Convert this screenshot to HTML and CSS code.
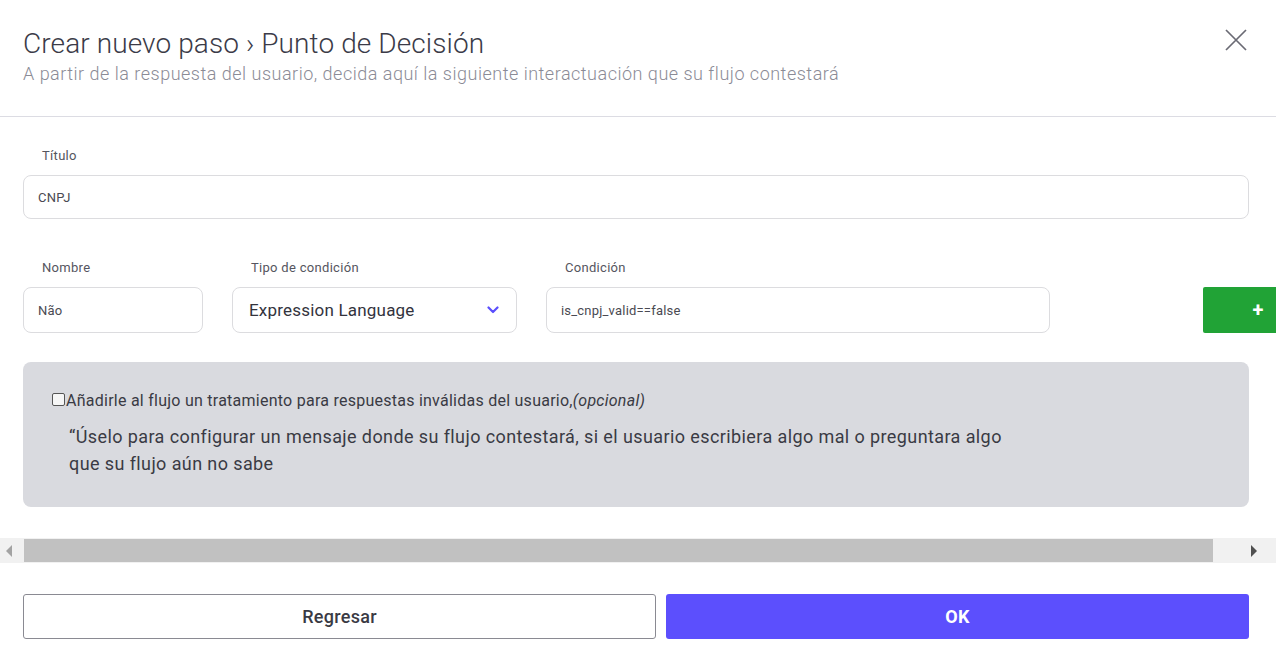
FILE: index.html
```html
<!DOCTYPE html>
<html lang="es">
<head>
<meta charset="utf-8">
<title>Crear nuevo paso</title>
<link rel="stylesheet" href="styles.css">
</head>
<body>
<div class="modal">
  <header class="modal-head">
    <div class="head-text">
      <h1 class="title">Crear nuevo paso › Punto de Decisión</h1>
      <p class="subtitle">A partir de la respuesta del usuario, decida aquí la siguiente interactuación que su flujo contestará</p>
    </div>
    <button class="close" type="button" aria-label="Cerrar">
      <svg width="24" height="24" viewBox="0 0 24 24"><path d="M2 2 L22 22 M22 2 L2 22" stroke="#6a6a74" stroke-width="1.7" fill="none"/></svg>
    </button>
  </header>

  <div class="modal-body">
    <div class="scroll-area">
      <div class="field">
        <label class="label">Título</label>
        <div class="input input-title">CNPJ</div>
      </div>

      <div class="cond-row">
        <div class="field f-name">
          <label class="label">Nombre</label>
          <div class="input input-row">Não</div>
        </div>
        <div class="field f-type">
          <label class="label">Tipo de condición</label>
          <div class="input input-row select">
            <span>Expression Language</span>
            <svg width="12" height="8" viewBox="0 0 12 8"><path d="M1.5 1.5 L6 6 L10.5 1.5" stroke="#5b4ffd" stroke-width="2.2" fill="none" stroke-linecap="round" stroke-linejoin="round"/></svg>
          </div>
        </div>
        <div class="field f-cond">
          <label class="label">Condición</label>
          <div class="input input-row">is_cnpj_valid==false</div>
        </div>
        <button class="add" type="button">+</button>
      </div>

      <div class="invalid-box">
        <label class="check-line">
          <input type="checkbox" class="check">
          <span>Añadirle al flujo un tratamiento para respuestas inválidas del usuario,<em>(opcional)</em></span>
        </label>
        <p class="quote">“Úselo para configurar un mensaje donde su flujo contestará, si el usuario escribiera algo mal o preguntara algo que su flujo aún no sabe</p>
      </div>
    </div>

    <div class="hscroll">
      <span class="arrow arrow-left"></span>
      <div class="track"><div class="thumb"></div></div>
      <span class="arrow arrow-right"></span>
    </div>
  </div>

  <footer class="modal-foot">
    <button class="btn btn-back" type="button">Regresar</button>
    <button class="btn btn-ok" type="button">OK</button>
  </footer>
</div>
</body>
</html>
```

FILE: styles.css
```css
* { box-sizing: border-box; }

html, body {
  margin: 0;
  background: #ffffff;
}

body {
  font-family: Roboto, "Noto Sans", Arial, sans-serif;
  color: #3c3c48;
  width: 1276px;
  height: 663px;
  overflow: hidden;
}

.modal {
  width: 1276px;
}

/* Header */
.modal-head {
  height: 117px;
  border-bottom: 1px solid #dcdce3;
  display: flex;
  justify-content: space-between;
  align-items: flex-start;
  padding: 26px 28px 0 23px;
}

.title {
  margin: 0;
  font-size: 28px;
  font-weight: 300;
  line-height: 36px;
  color: #3b3b48;
  letter-spacing: 0.1px;
}

.subtitle {
  margin: 0;
  font-size: 18px;
  font-weight: 300;
  line-height: 23px;
  color: #8b8b96;
  letter-spacing: 0.5px;
}

.close {
  border: 0;
  background: none;
  padding: 0;
  margin-top: 2px;
  cursor: pointer;
}

.close svg { display: block; }

/* Body */
.modal-body {
  width: 1276px;
}

.scroll-area {
  padding: 30px 0 0 23px;
  overflow: hidden;
  height: 421px;
}

.field {
  display: flex;
  flex-direction: column;
  flex: none;
}

.label {
  font-size: 13px;
  line-height: 18px;
  color: #555560;
  padding-left: 19px;
  margin-bottom: 10px;
  letter-spacing: 0.3px;
}

.input {
  border: 1px solid #dcdcdf;
  border-radius: 8px;
  background: #fff;
  font-size: 13px;
  color: #4a4a52;
  display: flex;
  align-items: center;
  padding: 0 14px;
  letter-spacing: 0.2px;
}

.input-title {
  width: 1226px;
  height: 44px;
}

.cond-row {
  display: flex;
  align-items: flex-end;
  margin-top: 40px;
}

.input-row {
  height: 46px;
}

.f-name { width: 180px; }
.f-type { width: 285px; margin-left: 29px; }
.f-cond { width: 504px; margin-left: 29px; }

.select {
  justify-content: space-between;
  font-size: 17px;
  font-weight: 400;
  color: #33333d;
  padding: 0 17px 0 16px;
}

.add {
  flex: none;
  width: 110px;
  height: 46px;
  margin-left: 153px;
  border: 0;
  border-radius: 2px;
  background: #21a336;
  color: #fff;
  font-family: inherit;
  font-size: 20px;
  font-weight: 700;
  line-height: 46px;
  padding: 0;
}

.invalid-box {
  width: 1226px;
  margin-top: 29px;
  height: 145px;
  background: #d9dadf;
  border-radius: 8px;
  padding: 29px 29px 0 29px;
}

.check-line {
  display: flex;
  align-items: center;
  font-size: 16px;
  line-height: 20px;
  color: #3a3a44;
  letter-spacing: 0.25px;
}

.check-line em {
  font-style: italic;
}

.check {
  appearance: none;
  -webkit-appearance: none;
  flex: none;
  width: 13px;
  height: 13px;
  margin: 0 1px 4px 0;
  border: 1px solid #555;
  border-radius: 2px;
  background: #f6f6f6;
}

.quote {
  margin: 12px 0 0 17px;
  max-width: 950px;
  font-size: 18px;
  line-height: 27px;
  color: #3a3a44;
  letter-spacing: 0.4px;
}

/* Horizontal scrollbar */
.hscroll {
  display: flex;
  align-items: center;
  height: 25px;
  background: #f1f1f1;
}

.track {
  flex: 1;
  height: 23px;
}

.thumb {
  width: 1189px;
  height: 23px;
  background: #c1c1c1;
}

.arrow {
  width: 24px;
  height: 25px;
  position: relative;
  flex: none;
}

.arrow::before {
  content: "";
  position: absolute;
  top: 7px;
  border-top: 6px solid transparent;
  border-bottom: 6px solid transparent;
}

.arrow-left::before {
  left: 6px;
  border-right: 6px solid #a3a3a3;
}

.arrow-right { width: 64px; }

.arrow-right::before {
  left: 38px;
  border-left: 6px solid #505050;
}

/* Footer */
.modal-foot {
  display: flex;
  gap: 10px;
  padding: 31px 27px 0 23px;
}

.btn {
  height: 45px;
  border-radius: 3px;
  font-family: inherit;
  font-size: 18px;
  font-weight: 700;
  cursor: pointer;
  letter-spacing: 0.3px;
}

.btn-back {
  width: 633px;
  background: #fff;
  border: 1px solid #8a8a92;
  color: #3a3a44;
  font-weight: 500;
}

.btn-ok {
  width: 583px;
  background: #5c4ffd;
  border: 0;
  color: #fff;
}
```
